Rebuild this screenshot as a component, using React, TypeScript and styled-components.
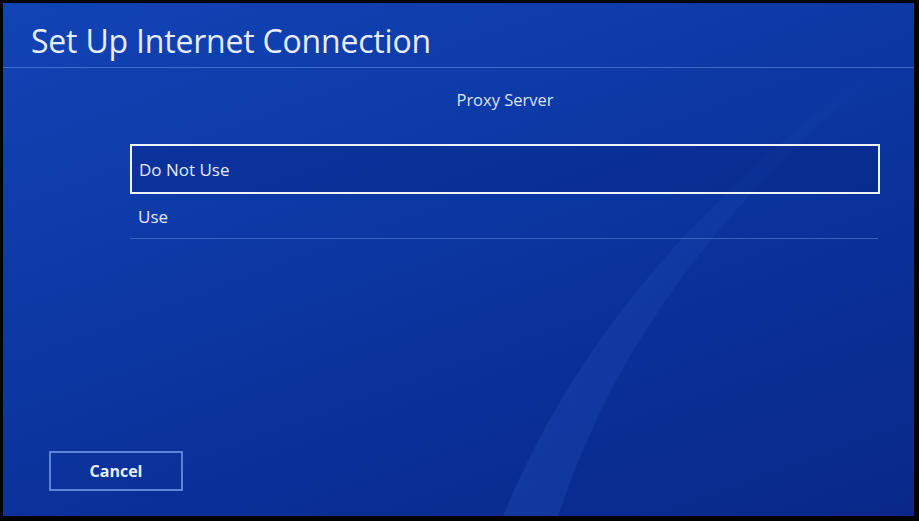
import React from "react";
import styled, { createGlobalStyle } from "styled-components";

const Global = createGlobalStyle`
  html, body { margin: 0; padding: 0; background: #000; }
  body { font-family: "Open Sans", "Noto Sans", sans-serif; }
`;

const Frame = styled.div`
  width: 919px;
  height: 521px;
  box-sizing: border-box;
  padding: 3px 5px 5px 3px;
  background: #000;
`;

const Screen = styled.div`
  position: relative;
  width: 100%;
  height: 100%;
  display: flex;
  flex-direction: column;
  overflow: hidden;
  background: linear-gradient(160deg, #1243b6 0%, #0d3aa6 35%, #0a2f96 70%, #0a288a 100%);
`;

const Streak = styled.svg`
  position: absolute;
  inset: 0;
  width: 100%;
  height: 100%;
  pointer-events: none;
`;

const Header = styled.header`
  height: 64px;
  display: flex;
  align-items: center;
  padding: 0 0 0 28px;
  border-bottom: 1px solid rgba(110, 150, 230, 0.55);
  position: relative;
`;

const Title = styled.h1`
  margin: 10px 0 0 0;
  font-size: 32px;
  font-weight: 400;
  color: #e6ecfa;
  letter-spacing: -0.2px;
`;

const Body = styled.main`
  flex: 1;
  display: flex;
  flex-direction: column;
  padding: 0 0 0 127px;
  position: relative;
`;

const Section = styled.div`
  width: 750px;
  display: flex;
  flex-direction: column;
`;

const Subtitle = styled.div`
  margin-top: 20px;
  height: 24px;
  text-align: center;
  font-size: 16.5px;
  color: #d9e2f6;
`;

const List = styled.div`
  margin-top: 32px;
  display: flex;
  flex-direction: column;
`;

const Option = styled.div<{ $selected?: boolean }>`
  height: ${(p) => (p.$selected ? "50px" : "45px")};
  box-sizing: border-box;
  display: flex;
  align-items: center;
  padding-left: ${(p) => (p.$selected ? "7px" : "8px")};
  font-size: 17px;
  color: #e3e9f8;
  border: ${(p) => (p.$selected ? "2px solid #eef2ff" : "none")};
  border-bottom: ${(p) => (p.$selected ? "2px solid #eef2ff" : "1px solid rgba(110,150,230,0.45)")};
  width: ${(p) => (p.$selected ? "750px" : "748px")};
  background: ${(p) => (p.$selected ? "rgba(6, 30, 120, 0.3)" : "transparent")};
`;

const Footer = styled.footer`
  margin-top: auto;
  padding: 0 0 25px 46px;
  position: relative;
`;

const CancelButton = styled.button`
  width: 134px;
  height: 40px;
  box-sizing: border-box;
  background: transparent;
  border: 2px solid rgba(120, 160, 240, 0.75);
  color: #e8edfa;
  font-family: "Open Sans", "Noto Sans", sans-serif;
  font-size: 16px;
  font-weight: 700;
  padding: 0;
`;

export default function App() {
  return (
    <>
      <Global />
      <Frame>
        <Screen>
          <Streak viewBox="0 0 911 513" preserveAspectRatio="none">
            <defs>
              <linearGradient id="sg" x1="0" y1="1" x2="1" y2="0">
                <stop offset="0" stopColor="#3f7ae0" stopOpacity="0.16" />
                <stop offset="0.6" stopColor="#3f7ae0" stopOpacity="0.08" />
                <stop offset="1" stopColor="#3f7ae0" stopOpacity="0" />
              </linearGradient>
            </defs>
            <path d="M 500 513 C 560 370, 660 220, 885 55 L 892 55 C 680 230, 600 380, 555 513 Z" fill="url(#sg)" />
          </Streak>
          <Header>
            <Title>Set Up Internet Connection</Title>
          </Header>
          <Body>
            <Section>
              <Subtitle>Proxy Server</Subtitle>
              <List>
                <Option $selected>Do Not Use</Option>
                <Option>Use</Option>
              </List>
            </Section>
          </Body>
          <Footer>
            <CancelButton>Cancel</CancelButton>
          </Footer>
        </Screen>
      </Frame>
    </>
  );
}
